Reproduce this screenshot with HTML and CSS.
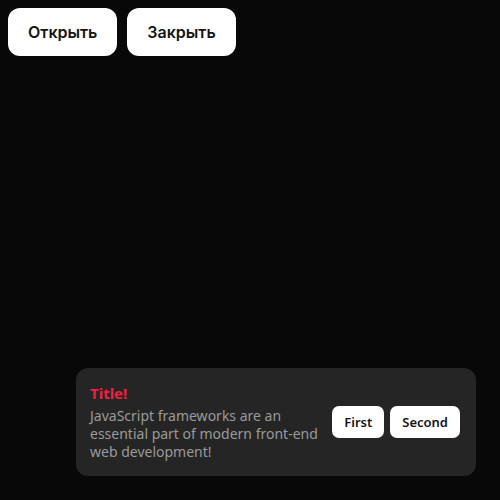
FILE: index.html
```html
<!DOCTYPE html>
<html lang="ru">
<head>
<meta charset="utf-8">
<link rel="stylesheet" href="styles.css">
</head>
<body>
<div class="controls">
  <button class="btn">Открыть</button>
  <button class="btn">Закрыть</button>
</div>
<div class="toast">
  <div class="toast-body">
    <div class="toast-title">Title!</div>
    <div class="toast-text">JavaScript frameworks are an essential part of modern front-end web development!</div>
  </div>
  <div class="toast-actions">
    <button class="tbtn">First</button>
    <button class="tbtn">Second</button>
  </div>
</div>
</body>
</html>
```
FILE: styles.css
```css
html, body {
  margin: 0;
  background: #080808;
}
body {
  padding: 8px;
  font-family: "Noto Sans", sans-serif;
}
.controls {
  display: flex;
  gap: 10px;
}
.btn {
  height: 48px;
  padding: 0 20px;
  border: none;
  border-radius: 12px;
  background: #fff;
  color: #141414;
  font-family: "Inter", sans-serif;
  font-size: 16px;
  font-weight: 600;
}
.toast {
  position: fixed;
  right: 24px;
  bottom: 24px;
  width: 400px;
  height: 108px;
  box-sizing: border-box;
  padding: 14px 16px 14px 14px;
  background: #252525;
  border-radius: 12px;
  display: flex;
  align-items: center;
  gap: 10px;
}
.toast-body {
  flex: 1;
}
.toast-title {
  color: #f0203e;
  font-size: 15px;
  font-weight: 700;
  line-height: 20px;
  margin-bottom: 4px;
}
.toast-text {
  color: #9a9a9a;
  font-size: 14px;
  line-height: 18px;
}
.toast-actions {
  display: flex;
  gap: 6px;
}
.tbtn {
  height: 32px;
  padding: 0 12px;
  border: none;
  border-radius: 7px;
  background: #fff;
  color: #141414;
  font-family: "Noto Sans", sans-serif;
  font-size: 13px;
  font-weight: 600;
}
```
